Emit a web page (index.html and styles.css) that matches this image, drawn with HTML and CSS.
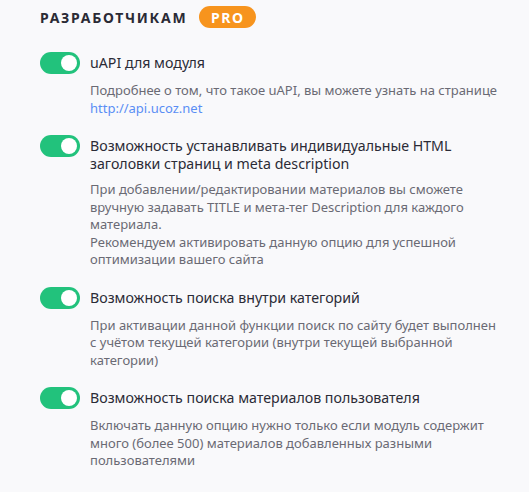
FILE: index.html
```html
<!DOCTYPE html>
<html lang="ru">
<head>
<meta charset="utf-8">
<link rel="stylesheet" href="styles.css">
</head>
<body>
<div class="page">
  <h2 class="title"><span class="title-text">РАЗРАБОТЧИКАМ</span><span class="badge">PRO</span></h2>
  <div class="list">
    <div class="item">
      <div class="row"><span class="toggle"><span class="knob"></span></span><span class="label">uAPI для модуля</span></div>
      <p class="desc">Подробнее о том, что такое uAPI, вы можете узнать на странице <a class="link" href="#">http://api.ucoz.net</a></p>
    </div>
    <div class="item">
      <div class="row"><span class="toggle"><span class="knob"></span></span><span class="label">Возможность устанавливать индивидуальные HTML заголовки страниц и meta description</span></div>
      <p class="desc">При добавлении/редактировании материалов вы сможете вручную задавать TITLE и мета-тег Description для каждого материала.<br>Рекомендуем активировать данную опцию для успешной оптимизации вашего сайта</p>
    </div>
    <div class="item">
      <div class="row"><span class="toggle"><span class="knob"></span></span><span class="label">Возможность поиска внутри категорий</span></div>
      <p class="desc">При активации данной функции поиск по сайту будет выполнен с учётом текущей категории (внутри текущей выбранной категории)</p>
    </div>
    <div class="item">
      <div class="row"><span class="toggle"><span class="knob"></span></span><span class="label">Возможность поиска материалов пользователя</span></div>
      <p class="desc">Включать данную опцию нужно только если модуль содержит много (более 500) материалов добавленных разными пользователями</p>
    </div>
  </div>
</div>
</body>
</html>
```
FILE: styles.css
```css
html, body {
  margin: 0;
  padding: 0;
  background: #f9f9fb;
}
body {
  font-family: "Noto Sans", "Open Sans", sans-serif;
  color: #2e2e38;
}
.page {
  padding: 6px 30px 20px 40px;
}
.title {
  margin: 0;
  display: flex;
  align-items: center;
  gap: 12px;
  height: 22px;
  font-size: 14px;
  font-weight: 700;
  letter-spacing: 1.7px;
  color: #2a2a35;
}
.badge {
  display: inline-flex;
  align-items: center;
  justify-content: center;
  width: 57px;
  height: 22px;
  border-radius: 11px;
  background: #f7941d;
  color: #fff;
  font-size: 14px;
  letter-spacing: 1.5px;
}
.list {
  display: flex;
  flex-direction: column;
  gap: 20px;
  margin-top: 26px;
}
.row {
  display: flex;
  align-items: flex-start;
  gap: 10px;
}
.toggle {
  flex: none;
  width: 40px;
  height: 22px;
  border-radius: 11px;
  background: #22c27c;
  display: flex;
  align-items: center;
  justify-content: flex-end;
  padding: 0 3px;
  box-sizing: border-box;
  margin-top: -2px;
}
.knob {
  width: 16px;
  height: 16px;
  border-radius: 50%;
  background: #fff;
}
.label {
  font-size: 14.2px;
  line-height: 18px;
  color: #2b2b36;
}
.desc {
  margin: 8px 0 0 50px;
  font-size: 13px;
  line-height: 17.5px;
  color: #6a6a74;
}
.link {
  color: #5a8ef5;
  text-decoration: none;
}
```
